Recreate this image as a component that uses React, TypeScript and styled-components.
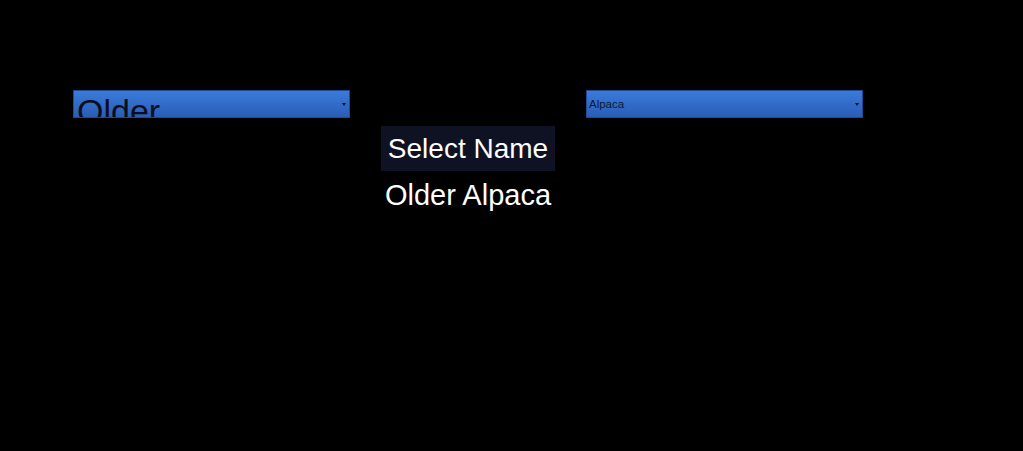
import React, { useState } from "react";
import styled, { createGlobalStyle } from "styled-components";

const GlobalStyle = createGlobalStyle`
  html, body {
    margin: 0;
    padding: 0;
    background: #000;
    font-family: "Liberation Sans", Arial, sans-serif;
  }
`;

const Page = styled.div`
  width: 1023px;
  height: 451px;
  background: #000;
  display: flex;
  align-items: flex-start;
  gap: 31px;
  padding: 90px 0 0 73px;
  box-sizing: border-box;
`;

const SelectBox = styled.div<{ $big?: boolean }>`
  position: relative;
  width: 277px;
  height: 28px;
  box-sizing: border-box;
  border: 1px solid #1d4a94;
  background: linear-gradient(#3a7bdb, #2a5db6);
  overflow: hidden;
  display: flex;
  align-items: ${(p) => (p.$big ? "flex-start" : "center")};
  padding-left: ${(p) => (p.$big ? "3px" : "2px")};
  color: ${(p) => (p.$big ? "#0b0f1c" : "#0e1830")};
  font-size: ${(p) => (p.$big ? "34px" : "11.5px")};
  line-height: ${(p) => (p.$big ? "38px" : "14px")};
  cursor: pointer;
`;

const BigLabel = styled.span`
  margin-top: 1px;
  white-space: nowrap;
`;

const Arrow = styled.span`
  position: absolute;
  right: 3px;
  top: 12px;
  width: 0;
  height: 0;
  border-left: 2.5px solid transparent;
  border-right: 2.5px solid transparent;
  border-top: 3px solid #0b1222;
`;

const Middle = styled.div`
  width: 174px;
  margin-top: 36px;
  display: flex;
  flex-direction: column;
  align-items: center;
  gap: 4px;
  color: #fff;
`;

const Button = styled.button`
  width: 174px;
  height: 45px;
  border: none;
  background: #0e1222;
  color: #fff;
  font-family: "Liberation Sans", Arial, sans-serif;
  font-size: 28px;
  padding: 0;
  cursor: pointer;
`;

const Result = styled.div`
  font-size: 29px;
  line-height: 40px;
  white-space: nowrap;
`;

const App = () => {
  const [first] = useState("Older");
  const [second] = useState("Alpaca");

  return (
    <>
      <GlobalStyle />
      <Page>
        <SelectBox $big>
          <BigLabel>{first}</BigLabel>
          <Arrow />
        </SelectBox>
        <Middle>
          <Button>Select Name</Button>
          <Result>
            {first} {second}
          </Result>
        </Middle>
        <SelectBox>
          <span>{second}</span>
          <Arrow />
        </SelectBox>
      </Page>
    </>
  );
};

export default App;
